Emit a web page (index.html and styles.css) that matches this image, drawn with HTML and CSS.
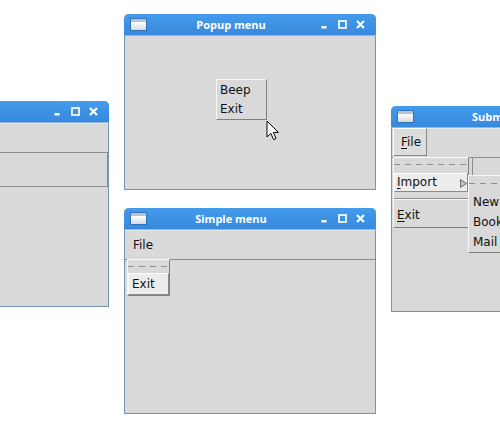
FILE: index.html
```html
<!DOCTYPE html>
<html>
<head>
<meta charset="utf-8">
<link rel="stylesheet" href="styles.css">
</head>
<body>
<div class="desktop">

  <!-- left partial window -->
  <div class="win win-left">
    <div class="titlebar">
      <span class="appicon"></span>
      <span class="title"></span>
      <span class="ctrls">
        <svg class="ctrl" viewBox="0 0 9 9"><rect x="1.5" y="6" width="5" height="2.5" fill="#fff"/></svg>
        <svg class="ctrl" viewBox="0 0 9 9"><rect x="1" y="1" width="7" height="7" fill="none" stroke="#fff" stroke-width="1.7"/></svg>
        <svg class="ctrl" viewBox="0 0 9 9"><path d="M1 1L8 8M8 1L1 8" stroke="#fff" stroke-width="2.2"/></svg>
      </span>
    </div>
    <div class="body">
      <div class="menubar"></div>
      <div class="toolbar"></div>
    </div>
  </div>

  <!-- popup menu window -->
  <div class="win win-popup">
    <div class="titlebar">
      <span class="appicon"></span>
      <span class="title">Popup menu</span>
      <span class="ctrls">
        <svg class="ctrl" viewBox="0 0 9 9"><rect x="1.5" y="6" width="5" height="2.5" fill="#fff"/></svg>
        <svg class="ctrl" viewBox="0 0 9 9"><rect x="1" y="1" width="7" height="7" fill="none" stroke="#fff" stroke-width="1.7"/></svg>
        <svg class="ctrl" viewBox="0 0 9 9"><path d="M1 1L8 8M8 1L1 8" stroke="#fff" stroke-width="2.2"/></svg>
      </span>
    </div>
    <div class="body">
      <div class="menu popup">
        <div class="mi">Beep</div>
        <div class="mi">Exit</div>
      </div>
    </div>
  </div>

  <!-- simple menu window -->
  <div class="win win-simple">
    <div class="titlebar">
      <span class="appicon"></span>
      <span class="title">Simple menu</span>
      <span class="ctrls">
        <svg class="ctrl" viewBox="0 0 9 9"><rect x="1.5" y="6" width="5" height="2.5" fill="#fff"/></svg>
        <svg class="ctrl" viewBox="0 0 9 9"><rect x="1" y="1" width="7" height="7" fill="none" stroke="#fff" stroke-width="1.7"/></svg>
        <svg class="ctrl" viewBox="0 0 9 9"><path d="M1 1L8 8M8 1L1 8" stroke="#fff" stroke-width="2.2"/></svg>
      </span>
    </div>
    <div class="body">
      <div class="menubar">
        <span class="mb-item">File</span>
      </div>
      <div class="menu drop-simple">
        <div class="tearoff"></div>
        <div class="mi active">Exit</div>
      </div>
    </div>
  </div>

  <!-- submenu window -->
  <div class="win win-sub">
    <div class="titlebar">
      <span class="appicon"></span>
      <span class="title">Submenu</span>
      <span class="ctrls">
        <svg class="ctrl" viewBox="0 0 9 9"><rect x="1.5" y="6" width="5" height="2.5" fill="#fff"/></svg>
        <svg class="ctrl" viewBox="0 0 9 9"><rect x="1" y="1" width="7" height="7" fill="none" stroke="#fff" stroke-width="1.7"/></svg>
        <svg class="ctrl" viewBox="0 0 9 9"><path d="M1 1L8 8M8 1L1 8" stroke="#fff" stroke-width="2.2"/></svg>
      </span>
    </div>
    <div class="body">
      <div class="menubar">
        <span class="mb-btn"><u>F</u>ile</span>
      </div>
      <div class="ghost"></div>
      <div class="menu drop-sub">
        <div class="tearoff"></div>
        <div class="mi active import"><u>I</u>mport
          <svg class="cascade" viewBox="0 0 7 9"><path d="M0.5 0.5L0.5 8.5L6.5 4.5Z" fill="#c4c4c4" stroke="#6e6e6e" stroke-width="1"/></svg>
        </div>
        <div class="sep"></div>
        <div class="mi tall"><u>E</u>xit</div>
      </div>
      <div class="menu cascade-menu">
        <div class="tearoff"></div>
        <div class="mi">New feed</div>
        <div class="mi">Bookmarks</div>
        <div class="mi">Mail</div>
      </div>
    </div>
  </div>

  <svg class="cursor" width="14" height="21" viewBox="0 0 14 21">
    <path d="M1 1L1 17L4.8 13.3L7.6 19.6L10 18.6L7.3 12.4L12.4 12.4Z" fill="#fff" stroke="#000" stroke-width="1" stroke-linejoin="round"/>
  </svg>
</div>
</body>
</html>
```

FILE: styles.css
```css
* { box-sizing: border-box; }

html, body {
  margin: 0;
  padding: 0;
}

body {
  width: 500px;
  height: 434px;
  background: #ffffff;
  overflow: hidden;
  font-family: "DejaVu Sans", "Liberation Sans", sans-serif;
  font-size: 12px;
  color: #111;
}

.desktop {
  position: relative;
  width: 500px;
  height: 434px;
  overflow: hidden;
}

/* windows */
.win {
  position: absolute;
  width: 252px;
  display: flex;
  flex-direction: column;
  border: 1px solid #7592b2;
  border-top: none;
  border-radius: 5px 5px 0 0;
  background: #d9d9d9;
}

.win-popup { left: 124px; top: 14px; height: 176px; }
.win-simple { left: 124px; top: 208px; height: 206px; }
.win-left { left: -143px; top: 101px; height: 206px; }
.win-sub { left: 391px; top: 106px; height: 206px; }

.titlebar {
  flex: none;
  height: 22px;
  margin: 0 -1px;
  background: linear-gradient(#449beb, #3789de);
  border-radius: 5px 5px 0 0;
  display: flex;
  align-items: center;
  color: #fff;
  border-bottom: 1px solid #8fb6dd;
}

.appicon {
  flex: none;
  width: 15px;
  height: 11px;
  margin-left: 7px;
  background: linear-gradient(#ffffff, #d6d9dd);
  border-top: 3px solid #b9c3cd;
  box-shadow: 0 0 0 1px rgba(30, 60, 100, 0.35);
}

.title {
  flex: 1;
  text-align: center;
  font-family: "Open Sans", "DejaVu Sans", sans-serif;
  font-weight: 700;
  font-size: 11px;
  padding-right: 4px;
  white-space: nowrap;
}

.ctrls {
  flex: none;
  display: flex;
  gap: 9px;
  margin-right: 11px;
}

.ctrl {
  width: 9px;
  height: 9px;
  display: block;
}

.body {
  flex: 1;
  position: relative;
  background: #d9d9d9;
}

/* menubars */
.menubar {
  height: 30px;
  border-top: 1px solid #e6e6e6;
  border-bottom: 1px solid #8c8c8c;
  display: flex;
  align-items: stretch;
}

.mb-item {
  padding: 0 8px;
  line-height: 28px;
}

.mb-btn {
  margin: 0 0 0 1px;
  width: 34px;
  height: 28px;
  line-height: 26px;
  padding-left: 7px;
  background: #dcdcdc;
  border: 1px solid;
  border-color: #fafafa #8a8a8a #8a8a8a #fafafa;
  margin-top: -1px;
}

.toolbar {
  height: 34px;
  border-bottom: 1px solid #8c8c8c;
  border-right: 1px solid #8c8c8c;
}

u {
  text-decoration: underline;
  text-underline-offset: 2px;
  text-decoration-thickness: 1px;
}

/* menus */
.menu {
  position: absolute;
  background: #d9d9d9;
  border: 1px solid;
  border-color: #f7f7f7 #7f7f7f #7f7f7f #f7f7f7;
}

.mi {
  height: 19px;
  line-height: 19px;
  padding: 0 3px;
  white-space: nowrap;
  overflow: hidden;
}

.mi.active {
  background: #ececec;
  border: 1px solid;
  border-color: #ffffff #8a8a8a #8a8a8a #ffffff;
  padding: 0 2px;
}

.tearoff {
  height: 13px;
  position: relative;
}

.tearoff::after {
  content: "";
  position: absolute;
  left: 0;
  right: 0;
  top: 6px;
  height: 1px;
  background: repeating-linear-gradient(to right, #8e8e8e 0 6px, transparent 6px 11px);
}

.popup {
  left: 91px;
  top: 43px;
  width: 51px;
  height: 41px;
  padding: 1px 0;
}

.drop-simple {
  left: 2px;
  top: 29px;
  width: 43px;
  height: 37px;
}

.drop-simple .mi.active {
  height: 22px;
  line-height: 20px;
  padding-left: 3px;
}

.ghost {
  position: absolute;
  left: 80px;
  top: 29px;
  width: 40px;
  height: 19px;
  border: 1px solid #8c8c8c;
  border-right: none;
}

.drop-sub {
  left: 1px;
  top: 29px;
  width: 76px;
  height: 71px;
  z-index: 1;
}

.drop-sub .tearoff { height: 15px; }

.drop-sub .import {
  position: relative;
  height: 19px;
  line-height: 17px;
}

.cascade {
  position: absolute;
  right: 0;
  top: 5px;
  width: 7px;
  height: 9px;
}

.sep {
  height: 12px;
  position: relative;
}

.sep::after {
  content: "";
  position: absolute;
  left: 0;
  right: 0;
  top: 6px;
  border-top: 1px solid #8a8a8a;
  border-bottom: 1px solid #f5f5f5;
}

.mi.tall {
  height: 23px;
  line-height: 23px;
  padding-left: 3px;
}

.cascade-menu {
  left: 76px;
  top: 47px;
  width: 70px;
  height: 78px;
  z-index: 2;
}

.cascade-menu .tearoff { height: 16px; }
.cascade-menu .tearoff::after { top: 7px; }

.cascade-menu .mi {
  height: 20px;
  line-height: 20px;
  padding-left: 4px;
}

.cursor {
  position: absolute;
  left: 266px;
  top: 120px;
}
```
